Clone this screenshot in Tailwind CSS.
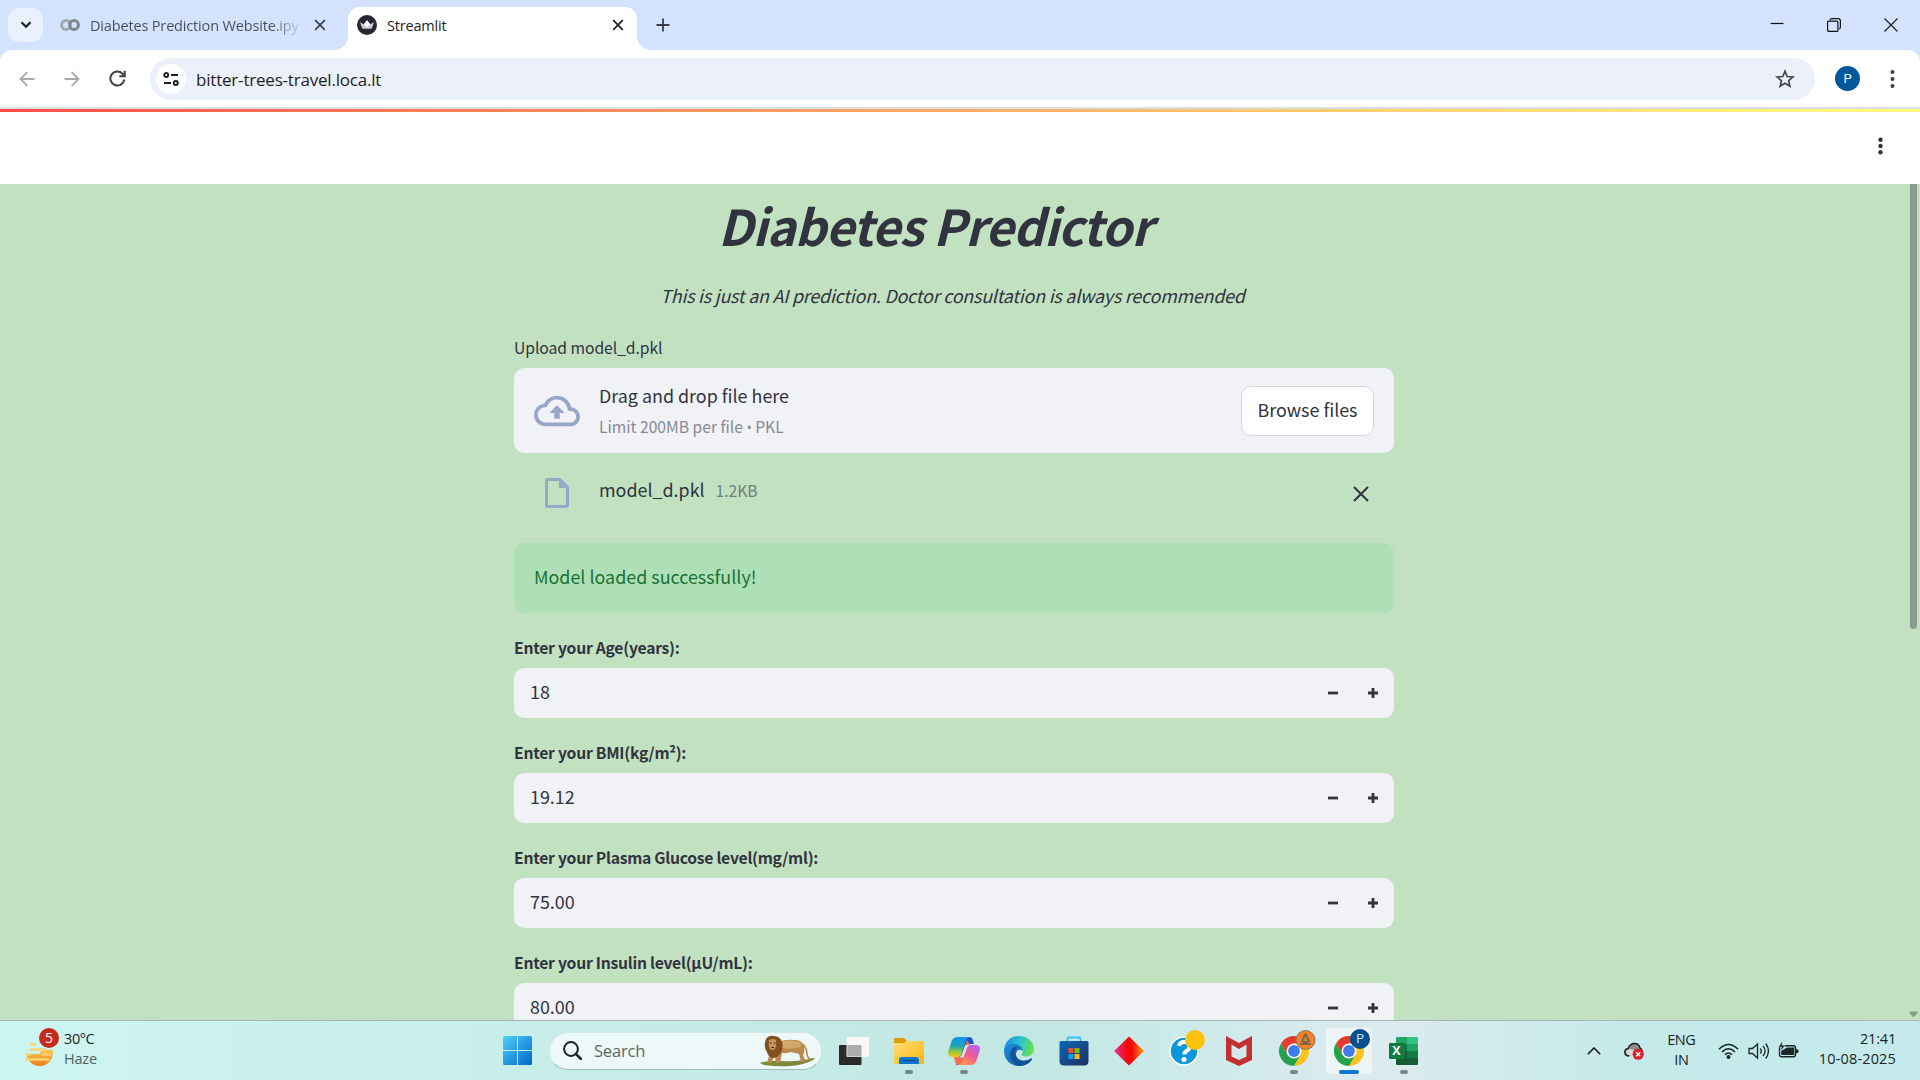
<!DOCTYPE html>
<html lang="en">
<head>
<meta charset="utf-8">
<title>Streamlit</title>
<script src="https://cdn.jsdelivr.net/npm/@tailwindcss/browser@4"></script>
</head>
<body class="w-[1920px] h-[1080px] overflow-hidden flex flex-col bg-[#d3e3fd] font-['Open_Sans',sans-serif] text-[#1f1f1f]">

<!-- Tab strip -->
<div class="h-[50px] shrink-0 flex items-end bg-[#d3e3fd]">
  <div class="w-[348px] h-[50px] flex items-center pl-2">
    <div class="w-[35px] h-[34px] rounded-[11px] bg-[#e9f0fe] flex items-center justify-center">
      <svg width="12" height="8" viewBox="0 0 12 8" fill="none" stroke="#1f1f1f" stroke-width="2.2"><path d="M1.5 1.3 6 5.8l4.5-4.5"/></svg>
    </div>
    <svg class="ml-[17px]" width="20" height="14" viewBox="0 0 20 14" fill="none" stroke-width="3"><circle cx="6" cy="7" r="4.4" stroke="#a2a6ad"/><circle cx="14" cy="7" r="4.4" stroke="#7f868f"/></svg>
    <div class="ml-[10px] mt-[2px] w-[210px] whitespace-nowrap text-[14.5px] leading-[22px] tracking-[-0.16px] text-transparent bg-clip-text bg-linear-to-r from-[#474d57] from-86% to-[#474d57]/10">Diabetes Prediction Website.ipy</div>
    <svg class="ml-[14px]" width="12" height="12" viewBox="0 0 12 12" stroke="#3c4047" stroke-width="1.7"><path d="M1.2 1.2l9.6 9.6M10.8 1.2l-9.6 9.6"/></svg>
  </div>
  <div class="relative w-[289px] h-[43px] rounded-t-[12px] bg-white flex items-center pb-[7px] pl-[9px]">
    <svg class="absolute -left-[14px] bottom-0" width="14" height="14" viewBox="0 0 14 14" fill="#fff"><path d="M14 0v14H0A14 14 0 0 0 14 0z"/></svg>
    <svg class="absolute -right-[14px] bottom-0" width="14" height="14" viewBox="0 0 14 14" fill="#fff"><path d="M0 0v14h14A14 14 0 0 1 0 0z"/></svg>
    <svg width="20" height="20" viewBox="0 0 20 20"><circle cx="10" cy="10" r="10" fill="#262730"/><path d="M3 7.3l3.8 2L10 5.2l3.2 4.1 3.8-2-2 5.800q-.3.700-1.200.700H6.200q-.9 0-1.200-.700z" fill="#c9cacd"/><path d="M10 5.200l3.200 4.100-3.200 3.200-3.200-3.200z" fill="#fff"/></svg>
    <div class="ml-[10px] mt-[2px] w-[221px] text-[14.5px] leading-[22px] tracking-[-0.2px]">Streamlit</div>
    <svg class="ml-[4px]" width="12" height="12" viewBox="0 0 12 12" stroke="#1f1f1f" stroke-width="1.7"><path d="M1.200 1.200l9.600 9.600M10.800 1.200l-9.600 9.600"/></svg>
  </div>
  <div class="ml-[19px] h-[50px] flex items-center"><svg width="14" height="14" viewBox="0 0 14 14" stroke="#3a3f46" stroke-width="1.8"><path d="M7 .5v13M.5 7h13"/></svg></div>
  <div class="ml-auto h-[50px] flex items-center gap-[43px] pr-[22px]">
    <svg width="14" height="14" viewBox="0 0 14 14"><path d="M.5 5.500h13" stroke="#111" stroke-width="1.200"/></svg>
    <svg width="14" height="14" viewBox="0 0 14 14" fill="none" stroke="#111" stroke-width="1.200"><rect x=".6" y="3.100" width="10.300" height="10.300" rx="1"/><path d="M3 1.900C3.300 1 4 .7 5 .7h6c1.600 0 2.400.8 2.400 2.400v6c0 1-.4 1.700-1.200 2"/></svg>
    <svg width="14" height="14" viewBox="0 0 14 14" stroke="#222" stroke-width="1.200"><path d="M.5.5l13 13M13.500.5l-13 13"/></svg>
  </div>
</div>

<!-- Toolbar -->
<div class="h-[59px] shrink-0 flex items-center bg-white rounded-t-[12px] border-b-2 border-[#dcdfe0] pl-[19px]">
  <svg width="16" height="16" viewBox="0 0 16 16" fill="none" stroke="#a8abae" stroke-width="1.800"><path d="M15.500 8H1.500M8.300 1.200 1.500 8l6.800 6.800"/></svg>
  <svg class="ml-[29px]" width="16" height="16" viewBox="0 0 16 16" fill="none" stroke="#a8abae" stroke-width="1.800"><path d="M.5 8h14M7.700 1.200 14.500 8l-6.800 6.800"/></svg>
  <svg class="ml-[29px]" width="17" height="17" viewBox="0 0 17 17" fill="none" stroke="#3c4043" stroke-width="2"><path d="M15.300 9.500A7 7 0 1 1 13.400 3.600l1.600 1.700"/><path d="M15.700.8v5.400h-5.400" /></svg>
  <div class="ml-[24px] w-[1665px] h-[42px] rounded-full bg-[#ecf0fa] flex items-center pl-[6px]">
    <div class="size-[30px] rounded-full bg-white flex items-center justify-center">
      <svg width="16" height="14" viewBox="0 0 16 14" fill="none" stroke="#1f1f1f" stroke-width="1.900"><circle cx="3.200" cy="3" r="2"/><path d="M8 3h7M1 11h7"/><circle cx="12.800" cy="11" r="2"/></svg>
    </div>
    <div class="ml-[10px] mt-[2px] text-[17px] leading-[28px] tracking-[-0.2px]">bitter-trees-travel.loca.lt</div>
    <svg class="ml-auto mr-[20px]" width="20" height="20" viewBox="0 0 20 20" fill="none" stroke="#43474b" stroke-width="1.700"><path d="M10 2.200l2.200 5.300 5.700.5-4.300 3.700 1.300 5.600L10 14.300l-4.900 3 1.300-5.600L2.100 8l5.700-.5z"/></svg>
  </div>
  <div class="ml-[20px] size-[25px] rounded-full bg-[#01579b] text-white text-[13px] leading-none font-['Roboto',sans-serif] flex items-center justify-center">P</div>
  <svg class="ml-[30px]" width="5" height="20" viewBox="0 0 5 20" fill="#3c4043"><circle cx="2.500" cy="3" r="2"/><circle cx="2.500" cy="10" r="2"/><circle cx="2.500" cy="17" r="2"/></svg>
</div>

<!-- Streamlit header -->
<div class="h-[3px] shrink-0 bg-linear-to-r from-[#ff4b4b] to-[#fffd80]"></div>
<div class="h-[72px] shrink-0 bg-white flex items-center justify-end pr-[37px] pb-[4px]">
  <svg width="5" height="18" viewBox="0 0 5 18" fill="#31333f"><circle cx="2.500" cy="2.800" r="2.200"/><circle cx="2.500" cy="9" r="2.200"/><circle cx="2.500" cy="15.200" r="2.200"/></svg>
</div>

<!-- Page -->
<main class="relative h-[836px] shrink-0 overflow-hidden bg-[#c2e1c1] pl-[514px] font-['Noto_Sans_CJK_SC',sans-serif] text-[#31333f]">
  <div class="w-[880px] flex flex-col">
    <h1 class="mt-[8px] pl-[204px] text-[49.200px] leading-[66px] font-bold italic tracking-[-0.840px] whitespace-nowrap">Diabetes Predictor</h1>
    <p class="mt-[22px] pr-[3px] text-center text-[17.900px] leading-[30px] italic tracking-[-0.220px] whitespace-nowrap">This is just an AI prediction. Doctor consultation is always recommended</p>
    <div class="mt-[25px] text-[15.700px] leading-[26px] tracking-[-0.050px]">Upload model_d.pkl</div>
    <div class="mt-[7px] h-[85px] rounded-[10px] bg-[#f0f2f6] flex px-[20px]">
      <svg class="self-center" width="46" height="46" viewBox="0 0 24 24" fill="#98a6c8"><path d="M19.350 10.040A7.490 7.490 0 0 0 12 4C9.110 4 6.600 5.640 5.350 8.040A5.994 5.994 0 0 0 0 14c0 3.310 2.690 6 6 6h13c2.760 0 5-2.240 5-5 0-2.640-2.050-4.780-4.650-4.960zM19 18H6c-2.210 0-4-1.790-4-4 0-2.050 1.530-3.760 3.560-3.970l1.070-.11.5-.95A5.469 5.469 0 0 1 12 6c2.620 0 4.880 1.860 5.390 4.430l.3 1.500 1.530.11A2.980 2.980 0 0 1 22 15c0 1.650-1.350 3-3 3zM8 13h2.550v3h2.900v-3H16l-4-4-4 4z"/></svg>
      <div class="ml-[19px] mt-[12px] flex flex-col gap-[4px]">
        <div class="text-[17.900px] leading-[30px]">Drag and drop file here</div>
        <div class="text-[15.700px] leading-[26px] tracking-[-0.020px] text-[#878993] whitespace-nowrap">Limit 200MB per file <span class="font-['Open_Sans',sans-serif] text-[14px] leading-none">•</span> PKL</div>
      </div>
      <div class="ml-auto mt-[18px] w-[133px] h-[50px] pb-[4px] rounded-[10px] border border-[#d6d6d9] bg-white flex items-center justify-center text-[17.900px] leading-[30px]">Browse files</div>
    </div>
    <div class="h-[90px] flex pl-[31px]">
      <svg class="mt-[25px]" width="24" height="30" viewBox="0 0 24 30"><path d="M3 1.500h11.800L22.500 9.200V27q0 1.500-1.500 1.500H3Q1.500 28.500 1.500 27V3Q1.500 1.500 3 1.500z" fill="none" stroke="#98a6c8" stroke-width="3"/><path d="M14 1l9 9h-9z" fill="#98a6c8"/></svg>
      <div class="ml-[30px] mt-[21px] text-[17.900px] leading-[30px]">model_d.pkl</div>
      <div class="ml-[11px] mt-[25px] text-[15.700px] leading-[26px] tracking-[-0.050px] text-[#6f8078]">1.2KB</div>
      <svg class="ml-auto mr-[25px] mt-[33px]" width="16" height="16" viewBox="0 0 16 16" stroke="#31333f" stroke-width="2"><path d="M1 1l14 14M15 1L1 15"/></svg>
    </div>
    <div class="h-[70px] rounded-[10px] bg-[#afdfb7] flex items-center pl-[20px] pb-[4px] text-[17.900px] leading-[30px] text-[#177233]">Model loaded successfully!</div>

    <div class="mt-[22px] text-[15.700px] leading-[26px] font-bold tracking-[-0.260px]">Enter your Age(years):</div>
    <div class="mt-[7px] h-[50px] rounded-[10px] bg-[#f0f2f6] flex items-center pl-[16px] pr-[16px] text-[17.900px]"><span class="leading-[30px] mb-[4px]">18</span>
      <svg class="ml-auto" width="10" height="10" viewBox="0 0 10 10" stroke="#31333f" stroke-width="2.800"><path d="M0 5h10"/></svg><svg class="ml-[30px]" width="10" height="10" viewBox="0 0 10 10" stroke="#31333f" stroke-width="2.800"><path d="M0 5h10M5 0v10"/></svg></div>

    <div class="mt-[22px] text-[15.700px] leading-[26px] font-bold tracking-[-0.260px]">Enter your BMI(kg/m²):</div>
    <div class="mt-[7px] h-[50px] rounded-[10px] bg-[#f0f2f6] flex items-center pl-[16px] pr-[16px] text-[17.900px]"><span class="leading-[30px] mb-[4px]">19.12</span>
      <svg class="ml-auto" width="10" height="10" viewBox="0 0 10 10" stroke="#31333f" stroke-width="2.800"><path d="M0 5h10"/></svg><svg class="ml-[30px]" width="10" height="10" viewBox="0 0 10 10" stroke="#31333f" stroke-width="2.800"><path d="M0 5h10M5 0v10"/></svg></div>

    <div class="mt-[22px] text-[15.700px] leading-[26px] font-bold tracking-[-0.260px]">Enter your Plasma Glucose level(mg/ml):</div>
    <div class="mt-[7px] h-[50px] rounded-[10px] bg-[#f0f2f6] flex items-center pl-[16px] pr-[16px] text-[17.900px]"><span class="leading-[30px] mb-[4px]">75.00</span>
      <svg class="ml-auto" width="10" height="10" viewBox="0 0 10 10" stroke="#31333f" stroke-width="2.800"><path d="M0 5h10"/></svg><svg class="ml-[30px]" width="10" height="10" viewBox="0 0 10 10" stroke="#31333f" stroke-width="2.800"><path d="M0 5h10M5 0v10"/></svg></div>

    <div class="mt-[22px] text-[15.700px] leading-[26px] font-bold tracking-[-0.260px]">Enter your Insulin level(μU/mL):</div>
    <div class="mt-[7px] h-[50px] rounded-[10px] bg-[#f0f2f6] flex items-center pl-[16px] pr-[16px] text-[17.900px]"><span class="leading-[30px] mb-[4px]">80.00</span>
      <svg class="ml-auto" width="10" height="10" viewBox="0 0 10 10" stroke="#31333f" stroke-width="2.800"><path d="M0 5h10"/></svg><svg class="ml-[30px]" width="10" height="10" viewBox="0 0 10 10" stroke="#31333f" stroke-width="2.800"><path d="M0 5h10M5 0v10"/></svg></div>
  </div>
  <div class="absolute right-[3px] top-0 w-[7px] h-[445px] rounded-b-[4px] bg-[#8a9b8d]"></div>
  <svg class="absolute right-[2px] bottom-[2px]" width="9" height="7" viewBox="0 0 9 7" fill="#8a9b8d"><path d="M.5.5h8v1.500L4.500 6.500.5 2z"/></svg>
</main>

<!-- Taskbar -->
<footer class="h-[60px] shrink-0 border-t border-[#a5b4b8] bg-linear-to-r from-[#cdf5f1] via-[#c3e8e3] via-50% to-[#c5eaec] flex">
  <div class="flex h-full w-full items-center bg-linear-to-r from-transparent from-55% via-[#dcebf0] via-72% to-transparent to-85%">
    <div class="w-[503px] flex items-center pl-[25px]">
      <div class="relative w-[29px] h-[36px]">
        <svg class="absolute left-0 bottom-[2px]" width="29" height="26" viewBox="0 0 29 26"><defs><linearGradient id="sun" x1="0" y1="0" x2="0" y2="1"><stop offset="0" stop-color="#f9c84a"/><stop offset="1" stop-color="#ee7d17"/></linearGradient></defs><path d="M1 13h13q2-5 14-4v2c0 8-5.500 14-13.500 14C8 25 3.500 21 1 13z" fill="url(#sun)"/><g stroke="#f7d277" stroke-width="2.500" stroke-linecap="round"><path d="M6 3.500h4M6 8.500h14M2 13.500h3M17 13.500h8M1.500 18.500h22"/></g></svg>
        <div class="absolute left-[14px] -top-[5px] size-5 rounded-full bg-[#c42b1c] text-white text-[14px] leading-5 text-center">5</div>
      </div>
      <div class="ml-[10px] mb-[3px] flex flex-col text-[14.500px] leading-[20px] tracking-[-0.400px] text-[#1c2526]"><span>30°C</span><span class="text-[#51605f] tracking-[-0.200px]">Haze</span></div>
    </div>
    <svg width="29" height="29" viewBox="0 0 29 29"><defs><linearGradient id="win" x1="0" y1="0" x2="1" y2="1"><stop offset="0" stop-color="#4fd0fb"/><stop offset="1" stop-color="#0067c9"/></linearGradient></defs><path fill="url(#win)" d="M1.500 0H14v14H0V1.500Q0 0 1.500 0zM15 0h12.500Q29 0 29 1.500V14H15zM0 15h14v14H1.500Q0 29 0 27.500zM15 15h14v12.500q0 1.500-1.500 1.500H15z"/></svg>
    <div class="ml-[17px] w-[273px] h-[38px] rounded-full bg-[#edf8f8] border border-b-[#9fb9b9] border-[#d3e7e7] flex items-center pl-[13px]">
      <svg width="19" height="19" viewBox="0 0 19 19" fill="none" stroke="#222" stroke-width="2"><circle cx="8" cy="8" r="6.900"/><path d="M12.800 12.800l5.200 5.200" stroke-width="2.500" stroke-linecap="round"/></svg>
      <span class="ml-[12px] text-[16.500px] leading-[24px] tracking-[-0.200px] text-[#5c6565]">Search</span>
      <svg class="ml-auto mr-[6px]" width="55" height="32" viewBox="0 0 55 32">
        <path d="M0 28q8-3 22-2t32-3q2 0-1 2-9 5-22 6T4 30z" fill="#7d8a3c"/>
        <path d="M43 9q4 5 4 10 1 6 5 5" fill="none" stroke="#b98a4e" stroke-width="1.600"/>
        <path d="M17 8q7-4 17-3 8-1 10 7 1 5-1 8l3 7h-5l-2-8-8-2q-5 2-9 1l-2 10h-4l-1-8-4 8H7l4-14z" fill="#b98a4e"/>
        <path d="M18 7q12-3 22 0 2 3 0 5-10 3-18 1z" fill="#d3a868"/>
        <path d="M6 4q3-4 8-3 6 0 8 6 2 6-2 12-3 4-7 4-5-1-6-6-4-5-1-13z" fill="#80501f"/>
        <path d="M9 5q4-2 7 0 1 5-1 9-3 2-5 0-2-4-1-9z" fill="#c8965a"/>
        <path d="M10 8h1.500M14 8h1.500M11.500 12.500h2.500" stroke="#3d230e" stroke-width="1.200"/>
      </svg>
    </div>
    <div class="ml-[4px] flex h-full">
      <div class="w-[55px] h-full flex items-center justify-center">
        <svg width="30" height="28" viewBox="0 0 30 28"><rect x="0" y="8" width="22.500" height="20" rx="1" fill="#2b2b2b"/><rect x="7.500" y="0" width="22.500" height="20" rx="1" fill="#f8f8f8"/><path d="M8.300 8H22.500v11.500H8.300z" fill="#adadad"/></svg>
      </div>
      <div class="relative w-[55px] h-full flex items-center justify-center">
        <svg width="30" height="28" viewBox="0 0 30 28"><defs><linearGradient id="fold" x1="0" y1="0" x2="1" y2="1"><stop offset="0" stop-color="#ffe07a"/><stop offset="1" stop-color="#f9b30c"/></linearGradient></defs><path d="M0 2Q0 1 1 1h9l3 3v6H0z" fill="#dc9c05"/><path d="M0 7q0-1 1-1h9l3-2h16q1 0 1 1v21q0 1-1 1H1q-1 0-1-1z" fill="url(#fold)"/><path d="M5 27v-4q0-3 3-3h14q3 0 3 3v4z" fill="#0c74cc"/><path d="M9 23.500h12" stroke="#06468c" stroke-width="1.200" stroke-linecap="round"/></svg>
        <div class="absolute bottom-[6px] w-2 h-1 rounded-full bg-[#76868a]"></div>
      </div>
      <div class="relative w-[55px] h-full flex items-center justify-center">
        <svg width="32" height="30" viewBox="0 0 32 30"><defs>
          <linearGradient id="cpA" x1="0" y1="0" x2="0" y2="1"><stop offset="0" stop-color="#1690f0"/><stop offset=".45" stop-color="#1aa7b5"/><stop offset=".75" stop-color="#9fc83a"/><stop offset="1" stop-color="#f5c51b"/></linearGradient>
          <linearGradient id="cpB" x1=".8" y1="0" x2=".2" y2="1"><stop offset="0" stop-color="#b262f0"/><stop offset=".5" stop-color="#ee5c93"/><stop offset="1" stop-color="#ff9950"/></linearGradient></defs>
          <path d="M21 1q3 0 3.800 3l1 4h-5.500q-3 0-4 3L12 26q-1 3-4 3 5-20 6-24z" fill="#1f53cf"/>
          <path d="M11 29q-3 0-3.800-3L6 21h5.500q2.500 0 3.400-3L19 4l3 5-5 17q-1 3-4 3z" fill="#f66d50"/>
          <path d="M10 1h11q-2.500 1-3.200 3.500L13.500 18q-1 3-4 3H4q-5-.5-3.500-6l3-9.500Q5 1 10 1z" fill="url(#cpA)"/>
          <path d="M22 29H11q2.500-1 3.200-3.500L18.500 12q1-3 4-3H28q5 .5 3.500 6l-3 9.500Q27 29 22 29z" fill="url(#cpB)"/><path d="M17.300 9.500q2.500-1 4.200-.5-2 1-2.800 3.500L15.500 21q-1.500 1-4 0 2-1 2.800-3.500z" fill="#d5ebea"/></svg>
        <div class="absolute bottom-[6px] w-2 h-1 rounded-full bg-[#76868a]"></div>
      </div>
      <div class="w-[55px] h-full flex items-center justify-center">
        <svg width="30" height="30" viewBox="0 0 30 30"><defs>
          <linearGradient id="edA" x1="0" y1=".3" x2="1" y2=".5"><stop offset="0" stop-color="#1590dc"/><stop offset=".5" stop-color="#2cc1d5"/><stop offset="1" stop-color="#69e34b"/></linearGradient>
          <linearGradient id="edB" x1="0" y1="0" x2="1" y2="1"><stop offset="0" stop-color="#1b93e0"/><stop offset="1" stop-color="#114a8b"/></linearGradient></defs>
          <path d="M0 14C1 5 7 0 15 0c9 0 15 6 15 13 0 5-4 7.500-8 7.500-4 0-5.200-1.500-4-3 1-1.600.8-3.500-.6-4.700C13 9 4 8 0 14z" fill="url(#edA)"/>
          <path d="M0 15C0 9 5 8 9 8c6 0 10 3 9.500 7-3-3-7 0-6.500 4 .7 5 7 8 15 3.500.8-.4 1.400.2.900 1C25 28 20 30 15.500 30 6 30 0 23 0 15z" fill="url(#edB)"/>
          <path d="M9 12q-4 4-2 10 2 5 7 7.500 9 1 13.900-6 .4-1-.9-.6-8 4-13 0-6-6-.5-11.500Q11 10 9 12z" fill="#15519b"/></svg>
      </div>
      <div class="w-[55px] h-full flex items-center justify-center">
        <svg width="30" height="30" viewBox="0 0 30 30"><defs><linearGradient id="st" x1="0" y1="0" x2="1" y2="1"><stop offset="0" stop-color="#0a67b5"/><stop offset="1" stop-color="#222f61"/></linearGradient></defs><path d="M8.500 6V2.500q0-1 1-1h11q1 0 1 1V6" fill="none" stroke="#35c1f1" stroke-width="1.900"/><path d="M.5 6.500q0-1.500 1.500-1.500h26q1.500 0 1.500 1.500V25q0 4.500-4.500 4.500H5Q.5 29.500.5 25z" fill="url(#st)"/><path d="M9.500 12h5v5h-5z" fill="#f25022"/><path d="M15.500 12h5v5h-5z" fill="#7fba00"/><path d="M9.500 18h5v5h-5z" fill="#00a4ef"/><path d="M15.500 18h5v5h-5z" fill="#ffb900"/></svg>
      </div>
      <div class="w-[55px] h-full flex items-center justify-center">
        <svg width="30" height="30" viewBox="0 0 30 30"><defs><linearGradient id="dm"><stop offset="0" stop-color="#e0359a"/><stop offset=".45" stop-color="#f60808"/><stop offset=".6" stop-color="#f60808"/><stop offset="1" stop-color="#ff9d18"/></linearGradient></defs><path d="M15 0.500l15 14.500-15 14.500L0 15z" fill="url(#dm)"/></svg>
      </div>
      <div class="w-[55px] h-full flex items-center justify-center">
        <svg class="overflow-visible" width="30" height="30" viewBox="0 0 30 30"><circle cx="15" cy="15" r="14" fill="#0b98da" stroke="#fff" stroke-width="1.500"/><path d="M10 10q.5-4 5.500-4 5 0 5 4.500 0 3-3 4.500-2.200 1.200-2.200 3.500" fill="none" stroke="#fff" stroke-width="4"/><circle cx="15" cy="23.500" r="2.500" fill="#fff"/><circle cx="26" cy="4" r="10" fill="#ffc20e"/></svg>
      </div>
      <div class="w-[55px] h-full flex items-center justify-center">
        <svg width="28" height="30" viewBox="0 0 28 30"><path d="M1 0l13 7L27 0v24l-13 6-13-6zM6.500 8.500v12L14 24l7.500-3.500v-12L14 13z" fill="#c2302f" fill-rule="evenodd"/></svg>
      </div>
      <div class="relative w-[55px] h-full flex items-center justify-center">
        <svg class="overflow-visible" width="30" height="30" viewBox="0 0 30 30"><path d="M2 7.500A15 15 0 0 1 28 7.500H15L8.500 18.700z" fill="#e33b2e"/><path d="M28 7.500A15 15 0 0 1 15 30l6.500-11.300V7.500z" fill="#fcc31e"/><path d="M15 30A15 15 0 0 1 2 7.500l6.500 11.200 13 0z" fill="#23a14c"/><circle cx="15" cy="15" r="7.500" fill="#fff"/><circle cx="15" cy="15" r="5.900" fill="#3f7bed"/><circle cx="26.500" cy="4" r="9.500" fill="#f58026" stroke="#857a63"/><path d="M21 8h11M26.500-2l-3.500 7q3.500 3 7 0z" fill="#b58a4c" stroke="#625d52" stroke-width="1.300"/></svg>
        <div class="absolute bottom-[6px] w-2 h-1 rounded-full bg-[#76868a]"></div>
      </div>
      <div class="relative w-[55px] h-full flex items-center justify-center">
        <div class="w-12 h-12 rounded-[5px] bg-[#eef5f6] border border-[#dfeaeb] flex items-center justify-center">
          <svg width="30" height="30" viewBox="0 0 30 30"><path d="M2 7.500A15 15 0 0 1 28 7.500H15L8.500 18.700z" fill="#e33b2e"/><path d="M28 7.500A15 15 0 0 1 15 30l6.500-11.300V7.500z" fill="#fcc31e"/><path d="M15 30A15 15 0 0 1 2 7.500l6.500 11.200 13 0z" fill="#23a14c"/><circle cx="15" cy="15" r="7.500" fill="#fff"/><circle cx="15" cy="15" r="5.900" fill="#3f7bed"/></svg>
        </div>
        <div class="absolute left-[29px] top-[8px] size-5 rounded-full bg-[#07508f] text-[#d5e4f0] text-[12px] leading-5 text-center font-['Roboto',sans-serif]">P</div>
        <div class="absolute bottom-[6px] w-5 h-1 rounded-full bg-[#0a78d4]"></div>
      </div>
      <div class="relative w-[55px] h-full flex items-center justify-center">
        <div class="relative">
          <svg width="30" height="28" viewBox="0 0 30 28"><path d="M7 1q0-1 1-1h11v7H7z" fill="#21a366"/><path d="M18 0h10q1 0 1 1v6H18z" fill="#33c481"/><path d="M7 7h11v7H7z" fill="#107c41"/><path d="M18 7h11v7H18z" fill="#21a366"/><path d="M18 14h11v7H18z" fill="#107c41"/><path d="M7 14h11v7h11v6q0 1-1 1H8q-1 0-1-1z" fill="#185c37"/><rect x="0" y="6" width="16" height="16" rx="1" fill="#117b41"/></svg>
          <div class="absolute left-0 top-[6px] w-4 h-4 text-white text-[12.500px] leading-4 font-bold text-center">X</div>
        </div>
        <div class="absolute bottom-[6px] w-2 h-1 rounded-full bg-[#76868a]"></div>
      </div>
    </div>
    <div class="ml-auto flex items-center pr-[24px] text-[14.500px] leading-[20px] tracking-[-0.400px] text-[#1b2526]">
      <svg width="14" height="8" viewBox="0 0 14 8" fill="none" stroke="#1b1b1b" stroke-width="1.600"><path d="M.8 7.200 7 1l6.200 6.200"/></svg>
      <svg class="ml-[23px]" width="20" height="18" viewBox="0 0 20 18"><path d="M5 14Q.8 14 .8 10.300q0-3 3.200-3.700Q6 1.500 10.500 1.500T16 6q2 1 2 3" fill="#8d8d8d" stroke="#222" stroke-width="1.500"/><path d="M2 9q5-4 9 0v4H5q-3-.5-3-4z" fill="#d9d9d9"/><circle cx="14.200" cy="12.200" r="5.600" fill="#dc1f2b"/><path d="M12.200 10.200l4 4M16.200 10.200l-4 4" stroke="#fff" stroke-width="1.300"/></svg>
      <div class="ml-[23px] mb-[2px] w-[29px] flex flex-col items-center"><span>ENG</span><span>IN</span></div>
      <svg class="ml-[22px]" width="21" height="16" viewBox="0 0 21 16" fill="none" stroke="#1b2526" stroke-width="1.500"><path d="M1 6.200q9.500-9.600 19 0M4 9q6.500-6.500 13 0M7 11.800q3.500-3.500 7 0"/><circle cx="10.500" cy="14" r="1.200" fill="#1b2526"/></svg>
      <svg class="ml-[9px]" width="21" height="18" viewBox="0 0 21 18" fill="none" stroke="#1b2526" stroke-width="1.300"><path d="M1 6.500h3.500l5-4.500v14l-5-4.500H1z"/><path d="M12.300 6.300q2 2.700 0 5.400M15 3.800q4.200 5.200 0 10.400M17.700 1.500q5.500 7.500 0 15"/></svg>
      <svg class="ml-[9px] mb-[3px]" width="21" height="17" viewBox="0 0 21 17"><rect x="1.500" y="4.800" width="16" height="11" rx="2.200" fill="none" stroke="#1b2526" stroke-width="1.400"/><path d="M9 6.500h7.200v7.500H3.200v-4z" fill="#1b2526"/><path d="M18 8.300h1.200q1.300 0 1.300 2t-1.300 2H18z" fill="#1b2526"/><path d="M4.500 0 .5 6h3L2 11l5-6.500H4.200z" fill="#1b2526" stroke="#cbe8eb" stroke-width=".5"/></svg>
      <div class="ml-[20px] mb-[3px] flex flex-col items-end"><span class="tracking-[-0.200px]">21:41</span><span class="tracking-[0.150px]">10-08-2025</span></div>
    </div>
  </div>
</footer>
</body>
</html>
